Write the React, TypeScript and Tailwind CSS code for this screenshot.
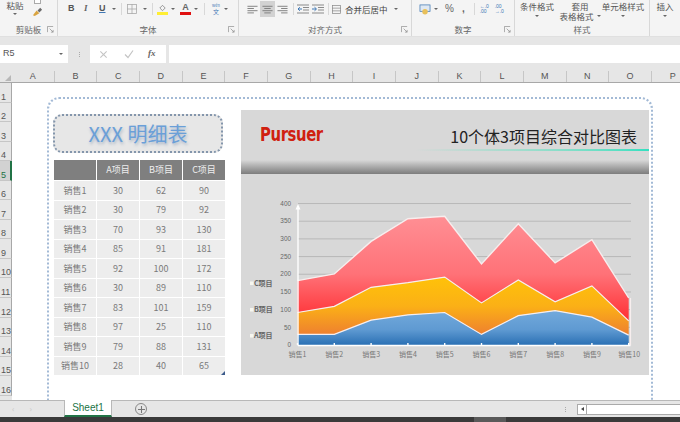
import React from "react";

const cols = "ABCDEFGHIJKLMNOP".split("");
const rows = Array.from({ length: 16 }, (_, i) => i + 1);
const data: [string, number, number, number][] = [
  ["销售1", 30, 62, 90],
  ["销售2", 30, 79, 92],
  ["销售3", 70, 93, 130],
  ["销售4", 85, 91, 181],
  ["销售5", 92, 100, 172],
  ["销售6", 30, 89, 110],
  ["销售7", 83, 101, 159],
  ["销售8", 97, 25, 110],
  ["销售9", 79, 88, 131],
  ["销售10", 28, 40, 65],
];

const X = (i: number) => 297.5 + i * 36.8;
const Y = (v: number) => 345 - v * 0.3537;

function line(vals: number[]) {
  return vals.map((v, i) => `${X(i).toFixed(1)},${Y(v).toFixed(1)}`).join(" ");
}

function AreaChart() {
  const a = data.map((d) => d[1]);
  const b = data.map((d) => d[1] + d[2]);
  const c = data.map((d) => d[1] + d[2] + d[3]);
  const zero = data.map(() => 0);
  const band = (top: number[], bot: number[]) =>
    line(top) + " " + [...bot].map((v, i) => `${X(i).toFixed(1)},${Y(v).toFixed(1)}`).reverse().join(" ");
  const font = "'Noto Sans CJK SC', sans-serif";
  return (
    <svg viewBox="241 174 408 201" className="block w-[408px] h-[201px]">
      <defs>
        <linearGradient id="gc" x1="0" y1="0" x2="0" y2="1">
          <stop offset="0" stopColor="#ff8f94" />
          <stop offset="0.55" stopColor="#ff7278" />
          <stop offset="1" stopColor="#ff2f33" />
        </linearGradient>
        <linearGradient id="gb" x1="0" y1="0" x2="0" y2="1">
          <stop offset="0" stopColor="#ffc209" />
          <stop offset="0.5" stopColor="#fbb016" />
          <stop offset="1" stopColor="#ee7f30" />
        </linearGradient>
        <linearGradient id="ga" x1="0" y1="0" x2="0" y2="1">
          <stop offset="0" stopColor="#72a9dc" />
          <stop offset="0.55" stopColor="#5f9ad2" />
          <stop offset="1" stopColor="#2a70b4" />
        </linearGradient>
      </defs>
      {[50, 100, 150, 200, 250, 300, 350, 400].map((v) => (
        <line key={v} x1="298" x2="631" y1={Y(v)} y2={Y(v)} stroke="#b4b4b4" strokeWidth="0.9" />
      ))}
      <polygon points={band(c, b)} fill="url(#gc)" />
      <polygon points={band(b, a)} fill="url(#gb)" />
      <polygon points={band(a, zero)} fill="url(#ga)" />
      <polyline points={line(c)} fill="none" stroke="#f7eeee" strokeWidth="1.4" />
      <polyline points={line(b)} fill="none" stroke="#f7eeee" strokeWidth="1.2" />
      <polyline points={line(a)} fill="none" stroke="#f7eeee" strokeWidth="1.2" />
      <line x1="298" y1="345.5" x2="630.5" y2="345.5" stroke="#fff" strokeWidth="1.4" />
      <line x1="298" y1="345.5" x2="298" y2="207" stroke="#fff" strokeWidth="1.4" />
      <polygon points="298,204 295.5,209.5 300.5,209.5" fill="#fff" />
      <line x1="630.5" y1={Y(c[9])} x2="630.5" y2="345.5" stroke="#f7eeee" strokeWidth="1.2" />
      {data.map((_, i) => (
        <rect key={i} x={X(i) - 0.7} y="343" width="1.4" height="2" fill="#fff" />
      ))}
      {[0, 50, 100, 150, 200, 250, 300, 350, 400].map((v) => (
        <text key={v} x="291" y={Y(v) + 2.2} textAnchor="end" fontSize="6.4" fill="#666" fontFamily="'Liberation Sans', sans-serif">
          {v}
        </text>
      ))}
      {data.map((d, i) => (
        <text key={i} x={i === 9 ? X(i) + 0.5 : X(i)} y="357" textAnchor="middle" fontSize="7" fill="#777" fontFamily={font}>
          {d[0]}
        </text>
      ))}
      {[
        ["C项目", 283.5],
        ["B项目", 310],
        ["A项目", 336],
      ].map(([t, y]) => (
        <g key={t as string}>
          <rect x="250" y={(y as number) - 2} width="3.5" height="3.5" fill="#f7f7f0" />
          <text x="254" y={(y as number) + 2.4} fontSize="7" fontWeight="700" fill="#666" fontFamily={font}>
            {t}
          </text>
        </g>
      ))}
    </svg>
  );
}

function Launcher({ className = "" }: { className?: string }) {
  return (
    <svg viewBox="0 0 8 8" className={`w-[7px] h-[7px] ${className}`} fill="none" stroke="#8a8a8a" strokeWidth="0.8">
      <path d="M0.5 7V0.5H7" />
      <path d="M3 3l4 4M7 4.5V7H4.5" />
    </svg>
  );
}

function Caret({ className = "" }: { className?: string }) {
  return <span className={`inline-block w-0 h-0 border-x-[2px] border-x-transparent border-t-[2px] border-t-[#666] ${className}`} />;
}

function AlignIcon({ kind, active = false }: { kind: "l" | "c" | "r"; active?: boolean }) {
  const widths = [11, 7, 11, 7];
  return (
    <span className={`flex w-[15px] h-[16px] items-center justify-center ${active ? "bg-[#d2d2d2]" : ""}`}>
      <svg viewBox="0 0 12 9" className="w-[11px] h-[9px]" stroke="#7a7a7a" strokeWidth="1">
        {widths.map((w, i) => {
          const x = kind === "l" ? 0.5 : kind === "c" ? (12 - w) / 2 : 11.5 - w;
          return <line key={i} x1={x} x2={x + w} y1={1 + i * 2.4} y2={1 + i * 2.4} />;
        })}
      </svg>
    </span>
  );
}

function IndentIcon({ flip = false }: { flip?: boolean }) {
  return (
    <svg viewBox="0 0 12 10" className="w-[12px] h-[10px]" fill="none" strokeWidth="1">
      <path d="M0 1h12M6 3.5h6M6 6h6M0 9h12" stroke="#8a8a8a" />
      <path d={flip ? "M0 5h4M2.5 3.2L4.5 5 2.5 6.8" : "M5 5H1M2.8 3.2L1 5l1.8 1.8"} stroke="#3f78b5" />
    </svg>
  );
}

function Group({ w, label, children, launcher = true, divider = true }: { w: number; label: string; children: React.ReactNode; launcher?: boolean; divider?: boolean }) {
  return (
    <div style={{ width: w }} className={`shrink-0 h-full flex flex-col ${divider ? "border-r border-[#d8d8d8]" : ""}`}>
      <div className="h-[24px] flex items-start overflow-hidden">{children}</div>
      <div className="relative h-[11px] flex items-center justify-center text-[8.5px] leading-none text-[#666]">
        {label}
        {launcher && <Launcher className="absolute right-[3px] top-[2px]" />}
      </div>
    </div>
  );
}

export default function App() {
  const cjk = { fontFamily: "'Noto Sans CJK SC', 'Liberation Sans', sans-serif" };
  return (
    <div className="w-[680px] h-[422px] overflow-hidden flex flex-col bg-white text-[#555]" style={cjk}>
      {/* Ribbon */}
      <div className="h-[37px] shrink-0 flex bg-[#f4f4f4] border-b border-[#e0e0e0] overflow-hidden">
        <Group w={58} label="剪贴板">
          <div className="w-[30px] flex flex-col items-center">
            <span className="text-[8.5px] leading-[10px] mt-[0px] text-[#555]">粘贴</span>
            <Caret className="mt-[3px]" />
          </div>
          <div className="flex flex-col items-center mt-[-2px] gap-[2px] ml-[2px]">
            <span className="w-[7px] h-[6px] border border-[#aaa] bg-white" />
            <svg viewBox="0 0 12 12" className="w-[11px] h-[11px]">
              <path d="M1 10l4-5 3 3-5 3z" fill="#d9a441" />
              <path d="M6 5l3-3 2 2-3 3z" fill="#6b6b6b" />
            </svg>
          </div>
        </Group>
        <Group w={181} label="字体">
          <div className="flex items-center h-[18px] pl-[10px] text-[9px] text-[#555]">
            <span className="w-[16px] font-bold" style={{ fontFamily: "'Liberation Sans', sans-serif" }}>B</span>
            <span className="w-[15px] italic font-bold text-[#666]" style={{ fontFamily: "'Liberation Serif', serif" }}>I</span>
            <span className="w-[12px] underline font-bold decoration-[#3f78b5]" style={{ fontFamily: "'Liberation Sans', sans-serif" }}>U</span>
            <Caret className="ml-[1px]" />
            <span className="ml-[5px] h-[12px] border-l border-[#d8d8d8]" />
            <svg viewBox="0 0 10 10" className="ml-[5px] w-[10px] h-[10px]" fill="none" stroke="#aaa" strokeWidth="0.8">
              <rect x="0.5" y="0.5" width="9" height="9" />
              <path d="M5 0v10M0 5h10" />
            </svg>
            <Caret className="ml-[6px]" />
            <span className="ml-[5px] h-[12px] border-l border-[#d8d8d8]" />
            <span className="ml-[4px] flex flex-col items-center w-[11px]">
              <svg viewBox="0 0 10 8" className="w-[9px] h-[8px]" fill="none" stroke="#777" strokeWidth="0.8">
                <path d="M2 4l3-3 3 3-3 3z" />
              </svg>
              <span className="w-[11px] h-[3px] bg-[#ffee33]" />
            </span>
            <Caret className="ml-[3px]" />
            <span className="ml-[5px] flex flex-col items-center w-[11px]">
              <span className="text-[9px] leading-[9px] font-bold text-[#666]" style={{ fontFamily: "'Liberation Sans', sans-serif" }}>A</span>
              <span className="w-[11px] h-[3px] bg-[#e01010]" />
            </span>
            <Caret className="ml-[3px]" />
            <span className="ml-[6px] h-[12px] border-l border-[#d8d8d8]" />
            <span className="ml-[6px] flex flex-col items-center w-[10px]">
              <span className="text-[4px] leading-[5px] text-[#3f78b5]">wén</span>
              <span className="text-[6px] leading-[7px] text-[#3f78b5]">文</span>
            </span>
            <Caret className="ml-[3px]" />
          </div>
        </Group>
        <Group w={173} label="对齐方式">
          <div className="flex items-center h-[18px] pl-[6px] gap-0">
            <AlignIcon kind="l" />
            <AlignIcon kind="c" active />
            <AlignIcon kind="r" />
            <span className="ml-[3px] mr-[3px] h-[12px] border-l border-[#d8d8d8]" />
            <IndentIcon />
            <span className="w-[3px]" />
            <IndentIcon flip />
            <span className="ml-[4px] mr-[3px] h-[12px] border-l border-[#d8d8d8]" />
            <svg viewBox="0 0 10 10" className="w-[9px] h-[9px]" fill="none" stroke="#8a8a8a" strokeWidth="0.8">
              <rect x="0.5" y="0.5" width="9" height="9" />
              <path d="M0 3.5h10M0 6.5h10" />
            </svg>
            <span className="ml-[4px] text-[8.5px] leading-none whitespace-nowrap text-[#444]">合并后居中</span>
            <Caret className="ml-[6px]" />
          </div>
        </Group>
        <Group w={103} label="数字">
          <div className="flex items-center h-[18px] pl-[7px] text-[#666]">
            <svg viewBox="0 0 12 12" className="w-[12px] h-[11px]">
              <rect x="0.5" y="1" width="11" height="7" fill="#dfe8f2" stroke="#3f78b5" strokeWidth="0.8" />
              <circle cx="6" cy="8.5" r="3" fill="#e8c05a" />
            </svg>
            <Caret className="ml-[3px]" />
            <span className="ml-[7px] text-[10px] leading-none" style={{ fontFamily: "'Liberation Sans', sans-serif" }}>%</span>
            <span className="ml-[8px] text-[10px] leading-none font-bold" style={{ fontFamily: "'Liberation Sans', sans-serif" }}>,</span>
            <span className="ml-[9px] h-[12px] border-l border-[#d8d8d8]" />
            <span className="ml-[5px] w-[10px] text-[5px] leading-[5px] text-[#3f78b5]" style={{ fontFamily: "'Liberation Sans', sans-serif" }}>←.0<br />.00</span>
            <span className="ml-[5px] w-[10px] text-[5px] leading-[5px] text-[#3f78b5]" style={{ fontFamily: "'Liberation Sans', sans-serif" }}>.00<br />→.0</span>
          </div>
        </Group>
        <Group w={135} label="样式" launcher={false}>
          <div className="flex text-[8.5px] leading-[10px] text-[#555] mt-[1px]">
            <div className="w-[44px] flex flex-col items-center">
              <span className="whitespace-nowrap">条件格式</span>
              <Caret className="mt-[4px]" />
            </div>
            <div className="w-[42px] flex flex-col items-center">
              <span>套用</span>
              <span className="flex items-center gap-[3px] whitespace-nowrap">
                表格格式
                <Caret />
              </span>
            </div>
            <div className="w-[44px] flex flex-col items-center">
              <span className="whitespace-nowrap">单元格样式</span>
              <Caret className="mt-[4px]" />
            </div>
          </div>
        </Group>
        <div className="flex-1 flex flex-col items-center text-[8.5px] leading-[10px] text-[#555] pt-[1px]">
          <span>插入</span>
          <Caret className="mt-[4px]" />
        </div>
      </div>

      {/* Formula bar */}
      <div className="h-[34px] shrink-0 bg-[#e6e6e6] pt-[8px] flex items-start">
        <div className="w-[68px] h-[18px] bg-white flex items-center justify-between pl-[3px] pr-[5px] text-[9px]" style={{ fontFamily: "'Liberation Sans', sans-serif" }}>
          <span>R5</span>
          <Caret />
        </div>
        <div className="w-[22px] h-[18px] flex flex-col items-center justify-center gap-[1px]">
          <span className="w-[1px] h-[1px] bg-[#aaa]" />
          <span className="w-[1px] h-[1px] bg-[#aaa]" />
          <span className="w-[1px] h-[1px] bg-[#aaa]" />
        </div>
        <div className="w-[76px] h-[18px] bg-white flex items-center pl-[9px] text-[#bbb]">
          <svg viewBox="0 0 10 10" className="w-[9px] h-[9px]" fill="none" stroke="#c4c4c4" strokeWidth="1.2">
            <path d="M1.5 1.5l7 7M8.5 1.5l-7 7" />
          </svg>
          <svg viewBox="0 0 10 10" className="ml-[16px] w-[10px] h-[10px]" fill="none" stroke="#c4c4c4" strokeWidth="1.2">
            <path d="M1 5.5l3 3 5-7" />
          </svg>
          <span className="ml-[14px] italic text-[9px] text-[#666] font-bold" style={{ fontFamily: "'Liberation Serif', serif" }}>fx</span>
        </div>
        <div className="ml-[3px] flex-1 h-[18px] bg-white" />
      </div>

      {/* Column headers */}
      <div className="h-[12px] shrink-0 flex bg-[#e6e6e6] border-b border-[#a8a8a8] text-[9px] leading-[11px] text-[#555]" style={{ fontFamily: "'Liberation Sans', sans-serif" }}>
        <div className="w-[12px] shrink-0 relative">
          <span className="absolute right-[1px] bottom-[1px] w-0 h-0 border-l-[6px] border-l-transparent border-b-[6px] border-b-[#b8b8b8]" />
        </div>
        {cols.map((c) => (
          <div key={c} className="w-[42.67px] shrink-0 text-center border-r border-[#c6c6c6]">
            {c}
          </div>
        ))}
      </div>

      {/* Sheet */}
      <div className="flex-1 min-h-0 flex overflow-hidden">
        <div className="w-[12px] shrink-0 flex flex-col bg-[#e6e6e6] text-[9px] leading-[10px] text-[#555]" style={{ fontFamily: "'Liberation Sans', sans-serif" }}>
          {rows.map((r) => (
            <div
              key={r}
              className={`h-[19.55px] shrink-0 flex items-end pl-[1px] border-b border-[#c6c6c6] ${r === 5 ? "bg-[#d2d2d2] text-[#217346] border-r-2 border-r-[#217346]" : "border-r border-r-[#a8a8a8]"}`}
            >
              {r}
            </div>
          ))}
        </div>
        <div className="flex-1 pl-[35px] pt-[14px]">
          <div className="w-[606px] h-[360px] border-2 border-dotted border-[#a3bad6] rounded-[12px] pl-[4px] pt-[11px] flex items-start">
            <div className="w-[172px] shrink-0 pt-[4px]">
              <div className="w-[170px] h-[39px] rounded-[9px] border-2 border-dotted border-[#8496ac] bg-[#e7e7e7] flex items-center justify-center">
                <span className="text-[20px] leading-none text-[#6a9fd8]" style={{ textShadow: "1px 2px 3px rgba(90,120,160,0.45)" }}>
                  XXX 明细表
                </span>
              </div>
              <div className="relative mt-[7px] ml-[1px] grid grid-cols-[42px_42px_42px_42px] gap-[1px] text-[9px] text-center text-[#7a7a7a]">
                <div className="h-[20px] bg-[#7f7f7f]" />
                {["A项目", "B项目", "C项目"].map((h) => (
                  <div key={h} className="h-[20px] bg-[#7f7f7f] text-[#eeeeee] flex items-center justify-center">
                    {h}
                  </div>
                ))}
                {data.map((d) =>
                  d.map((v, i) => (
                    <div key={`${d[0]}${i}`} className="h-[18.55px] bg-[#ededed] flex items-center justify-center">
                      {v}
                    </div>
                  ))
                )}
                <span className="absolute right-[0px] bottom-[0px] w-0 h-0 border-l-[4px] border-l-transparent border-b-[4px] border-b-[#3b5a8a]" />
              </div>
            </div>
            <div className="ml-[16px] w-[408px] h-[265px] shrink-0 bg-[#d8d8d8] flex flex-col">
              <div className="h-[64px] shrink-0 flex flex-col">
                <div className="h-[38px] shrink-0 flex items-end justify-between pl-[19px] pr-[12px]">
                  <span
                    className="text-[#d0200f] text-[19px] leading-[24px] font-bold origin-left scale-x-[0.78]"
                    style={{ fontFamily: "'DejaVu Sans', sans-serif", marginBottom: 2, letterSpacing: "-0.5px" }}
                  >
                    Pursuer
                  </span>
                  <span className="text-[#222] text-[16px] leading-[24px] whitespace-nowrap">
                    10个体3项目综合对比图表
                  </span>
                </div>
                <div className="h-[2px] mt-[1px] ml-[174px] shrink-0 bg-gradient-to-r from-[#d8d8d8] to-[#2fe0c0]" />
                <div className="flex-1" />
                <div className="h-[14px] shrink-0 bg-gradient-to-b from-[#d8d8d8] to-[#7d7d7d]" />
              </div>
              <AreaChart />
            </div>
          </div>
        </div>
      </div>

      {/* Tabs */}
      <div className="h-[17px] shrink-0 flex bg-[#e6e6e6] border-t border-[#b8b8b8]">
        <div className="w-[64px] shrink-0 flex items-center pl-[12px] gap-[15px] text-[#c4c4c4] text-[8px]">
          <span>‹</span>
          <span>›</span>
        </div>
        <div className="w-[48px] shrink-0 -mt-[1px] bg-white border-x border-[#b8b8b8] border-b-2 border-b-[#217346] flex items-center justify-center text-[10px] text-[#217346]" style={{ fontFamily: "'Liberation Sans', sans-serif" }}>
          Sheet1
        </div>
        <div className="ml-[23px] w-[12px] h-[12px] mt-[2px] rounded-full border border-[#888] flex items-center justify-center text-[10px] leading-none text-[#777]">
          <svg viewBox="0 0 8 8" className="w-[7px] h-[7px]" stroke="#777" strokeWidth="1.2">
            <path d="M4 0v8M0 4h8" />
          </svg>
        </div>
        <div className="flex-1" />
        <div className="w-[115px] shrink-0 flex items-center">
          <div className="flex flex-col gap-[1px] mr-[11px]">
            <span className="w-[1px] h-[1px] bg-[#aaa]" />
            <span className="w-[1px] h-[1px] bg-[#aaa]" />
            <span className="w-[1px] h-[1px] bg-[#aaa]" />
          </div>
          <div className="w-[10px] h-[11px] bg-white border border-[#aaa] flex items-center justify-center">
            <span className="w-0 h-0 border-y-[2px] border-y-transparent border-r-[3px] border-r-[#444]" />
          </div>
          <div className="flex-1 h-[11px] bg-white border-y border-[#aaa]" />
        </div>
      </div>
      <div className="h-[5px] shrink-0 bg-[#3a3a3a] flex">
        <div className="ml-[474px] w-[32px] h-[5px] bg-[#5a5a5a]" />
      </div>
    </div>
  );
}
